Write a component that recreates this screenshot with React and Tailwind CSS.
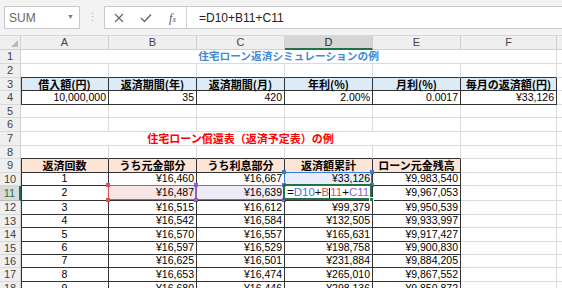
import React from "react";

const FONT = "font-['Liberation_Sans','Noto_Sans_CJK_JP',sans-serif]";
const CJK = "font-['Noto_Sans_CJK_JP','Liberation_Sans',sans-serif]";

const H = { 13: "h-[13px]", 14: "h-[14px]", 15: "h-[15px]" };
const W = ["w-[88px]", "w-[88px]", "w-[88px]", "w-[88px]", "w-[88px]", "w-[96px]"];
const GRID = "border-r-[#dadada] border-b-[#dadada]";
const DARK = "border-r-[#333] border-b-[#333]";

const loanRows = [
  ["1", "¥16,460", "¥16,667", "¥33,126", "¥9,983,540"],
  ["2", "¥16,487", "¥16,639", null, "¥9,967,053"],
  ["3", "¥16,515", "¥16,612", "¥99,379", "¥9,950,539"],
  ["4", "¥16,542", "¥16,584", "¥132,505", "¥9,933,997"],
  ["5", "¥16,570", "¥16,557", "¥165,631", "¥9,917,427"],
  ["6", "¥16,597", "¥16,529", "¥198,758", "¥9,900,830"],
  ["7", "¥16,625", "¥16,501", "¥231,884", "¥9,884,205"],
  ["8", "¥16,653", "¥16,474", "¥265,010", "¥9,867,552"],
  ["9", "¥16,680", "¥16,446", "¥298,136", "¥9,850,872"],
];
const loanHeights = [13, 15, 14, 13, 14, 13, 13, 14, 14];

function RowHead({ n, active }) {
  return (
    <div
      className={`w-[21px] shrink-0 h-full flex items-center justify-center border-b text-[11px] ${
        active
          ? "bg-[#d9d9d9] text-[#217346] border-r-2 border-r-[#217346] border-b-[#bdbdbd]"
          : "bg-[#efefef] text-[#444] border-r border-r-[#d0d0d0] border-b-[#d8d8d8]"
      }`}
    >
      {n}
    </div>
  );
}

function Cell({ w, className = "", children }) {
  return (
    <div className={`${w} shrink-0 h-full border-r border-b flex items-center whitespace-nowrap px-[2px] ${className}`}>
      {children}
    </div>
  );
}

function Filler({ className = "border-b-[#dadada]" }) {
  return <div className={`flex-1 h-full border-b ${className}`} />;
}

function Corners({ color }) {
  return (
    <>
      <span className={`absolute -top-[3px] -left-[3px] w-[4px] h-[4px] ${color}`} />
      <span className={`absolute -top-[3px] -right-[3px] w-[4px] h-[4px] ${color}`} />
      <span className={`absolute -bottom-[3px] -left-[3px] w-[4px] h-[4px] ${color}`} />
      <span className={`absolute -bottom-[3px] -right-[3px] w-[4px] h-[4px] ${color}`} />
    </>
  );
}

function RefBox({ border, fill }) {
  return (
    <div className={`absolute -top-px -left-px right-0 bottom-0 border ${border}`}>
      <Corners color={fill} />
    </div>
  );
}

function Toolbar() {
  return (
    <div className="h-[36px] bg-[#f3f3f3] border-b border-[#d6d6d6] flex items-center">
      <div className="ml-[4px] w-[76px] h-[23px] bg-white border border-[#c8c8c8] flex items-center justify-between pl-[4px] pr-[5px]">
        <span className="text-[12px] text-[#666]">SUM</span>
        <span className="text-[7px] text-[#777]">▼</span>
      </div>
      <div className="w-[24px] flex justify-center text-[11px] text-[#b0b0b0]">⋮</div>
      <div className="flex-1 h-[23px] flex bg-white border border-[#c8c8c8] border-r-0">
        <div className="w-[82px] flex items-center border-r border-[#d4d4d4]">
          <div className="w-[27px] flex justify-center">
            <svg width="10" height="10" viewBox="0 0 10 10">
              <path d="M1 1 L9 9 M9 1 L1 9" stroke="#666" strokeWidth="1.2" />
            </svg>
          </div>
          <div className="w-[27px] flex justify-center">
            <svg width="12" height="10" viewBox="0 0 12 10">
              <path d="M1 5 L4.5 8.5 L11 1.5" stroke="#666" strokeWidth="1.4" fill="none" />
            </svg>
          </div>
          <div className="w-[27px] flex justify-center">
            <span className="font-['Liberation_Serif',serif] italic text-[12px] text-[#555]">
              f<span className="text-[8px]">x</span>
            </span>
          </div>
        </div>
        <div className="flex items-center pl-[12px] text-[12px] text-[#222]">=D10+B11+C11</div>
      </div>
    </div>
  );
}

function ColHeads() {
  const letters = ["A", "B", "C", "D", "E", "F"];
  return (
    <div className="h-[14px] flex bg-[#efefef] text-[11px] text-[#444]">
      <div className="w-[21px] shrink-0 h-full border-r border-b border-[#d0d0d0] flex items-end justify-end p-[2px]">
        <svg width="7" height="7" viewBox="0 0 7 7">
          <path d="M7 0 L7 7 L0 7 Z" fill="#b8b8b8" />
        </svg>
      </div>
      {letters.map((l, i) => (
        <div
          key={l}
          className={`${W[i]} shrink-0 h-full border-r border-r-[#d0d0d0] flex items-center justify-center ${
            l === "D" ? "bg-[#d6d6d6] text-[#262626] border-b-2 border-b-[#217346]" : "border-b border-b-[#d0d0d0]"
          }`}
        >
          {l}
        </div>
      ))}
      <Filler className="border-b-[#d0d0d0]" />
    </div>
  );
}

export default function App() {
  return (
    <div className={`w-[562px] h-[288px] overflow-hidden bg-white ${FONT} text-[10.5px] text-black`}>
      <Toolbar />
      <ColHeads />

      {/* row 1 */}
      <div className="flex h-[14px]">
        <RowHead n={1} />
        <div className={`w-[536px] shrink-0 h-full border-r border-b ${GRID} flex items-center justify-center`}>
          <span className={`${CJK} font-bold text-[10.7px] text-[#3f8ad6]`}>住宅ローン返済シミュレーションの例</span>
        </div>
        <Filler />
      </div>

      {/* row 2 */}
      <div className="flex h-[14px]">
        <RowHead n={2} />
        {W.map((w, i) => (
          <Cell key={i} w={w} className="border-r-[#dadada] border-b-[#333]" />
        ))}
        <Filler />
      </div>

      {/* row 3 */}
      <div className="flex h-[13px]">
        <RowHead n={3} />
        {["借入額(円)", "返済期間(年)", "返済期間(月)", "年利(%)", "月利(%)", "毎月の返済額(円)"].map((t, i) => (
          <Cell
            key={t}
            w={W[i]}
            className={`${DARK} bg-[#ddebf7] justify-center ${CJK} font-bold text-[11px] ${
              i === 0 ? "shadow-[inset_1px_0_0_#333]" : ""
            }`}
          >
            {t}
          </Cell>
        ))}
        <Filler />
      </div>

      {/* row 4 */}
      <div className="flex h-[14px]">
        <RowHead n={4} />
        {["10,000,000", "35", "420", "2.00%", "0.0017", "¥33,126"].map((t, i) => (
          <Cell key={t} w={W[i]} className={`${DARK} justify-end ${i === 0 ? "shadow-[inset_1px_0_0_#333]" : ""}`}>
            {t}
          </Cell>
        ))}
        <Filler />
      </div>

      {/* rows 5, 6 */}
      {[
        [5, 13],
        [6, 14],
      ].map(([n, h]) => (
        <div key={n} className={`flex ${H[h]}`}>
          <RowHead n={n} />
          {W.map((w, i) => (
            <Cell key={i} w={w} className={GRID} />
          ))}
          <Filler />
        </div>
      ))}

      {/* row 7 */}
      <div className="flex h-[14px]">
        <RowHead n={7} />
        <div className={`w-[440px] shrink-0 h-full border-r border-b ${GRID} flex items-center justify-center`}>
          <span className={`${CJK} font-bold text-[11px] text-[#ff0000]`}>住宅ローン償還表（返済予定表）の例</span>
        </div>
        <Cell w={W[5]} className={GRID} />
        <Filler />
      </div>

      {/* row 8 */}
      <div className="flex h-[13px]">
        <RowHead n={8} />
        {W.map((w, i) => (
          <Cell key={i} w={w} className={i < 5 ? "border-r-[#dadada] border-b-[#333]" : GRID} />
        ))}
        <Filler />
      </div>

      {/* row 9 */}
      <div className="flex h-[14px]">
        <RowHead n={9} />
        {["返済回数", "うち元金部分", "うち利息部分", "返済額累計", "ローン元金残高"].map((t, i) => (
          <Cell
            key={t}
            w={W[i]}
            className={`${DARK} bg-[#fce4d6] justify-center ${CJK} font-bold text-[11px] ${
              i === 0 ? "shadow-[inset_1px_0_0_#333]" : ""
            }`}
          >
            {t}
          </Cell>
        ))}
        <Cell w={W[5]} className={GRID} />
        <Filler />
      </div>

      {/* rows 10 - 18 */}
      {loanRows.map((r, idx) => {
        const n = idx + 10;
        return (
          <div key={n} className={`flex ${H[loanHeights[idx]]}`}>
            <RowHead n={n} active={n === 11} />
            <Cell w={W[0]} className={`${DARK} justify-center shadow-[inset_1px_0_0_#333]`}>
              {r[0]}
            </Cell>
            <Cell w={W[1]} className={`${DARK} justify-end relative ${n === 11 ? "bg-[#f8e6e6]" : ""}`}>
              {r[1]}
              {n === 11 && <RefBox border="border-[#d9534f]" fill="bg-[#d9534f]" />}
            </Cell>
            <Cell w={W[2]} className={`${DARK} justify-end relative ${n === 11 ? "bg-[#eeebf8]" : ""}`}>
              {r[2]}
              {n === 11 && <RefBox border="border-[#8e5fd0]" fill="bg-[#8e5fd0]" />}
            </Cell>
            <Cell w={W[3]} className={`${DARK} relative ${n === 10 ? "bg-[#e8eef9]" : ""} ${n === 11 ? "justify-start" : "justify-end"}`}>
              {n === 11 ? (
                <span className="flex items-center text-[11.5px]">
                  <span>=</span>
                  <span className="text-[#3c78d8]">D10</span>
                  <span>+</span>
                  <span className="text-[#d9534f]">B</span>
                  <span className="w-px h-[10px] bg-black" />
                  <span className="text-[#d9534f]">11</span>
                  <span>+</span>
                  <span className="text-[#8e5fd0]">C11</span>
                </span>
              ) : (
                r[3]
              )}
              {n === 10 && <RefBox border="border-[#3c78d8]" fill="bg-[#3c78d8]" />}
              {n === 11 && (
                <div className="absolute -top-[2px] -left-[2px] right-0 bottom-0 border-2 border-[#217346]">
                  <span className="absolute -bottom-[4px] -right-[4px] w-[5px] h-[5px] bg-[#217346] border border-white" />
                </div>
              )}
            </Cell>
            <Cell w={W[4]} className={`${DARK} justify-end`}>
              {r[4]}
            </Cell>
            <Cell w={W[5]} className={GRID} />
            <Filler />
          </div>
        );
      })}
    </div>
  );
}
